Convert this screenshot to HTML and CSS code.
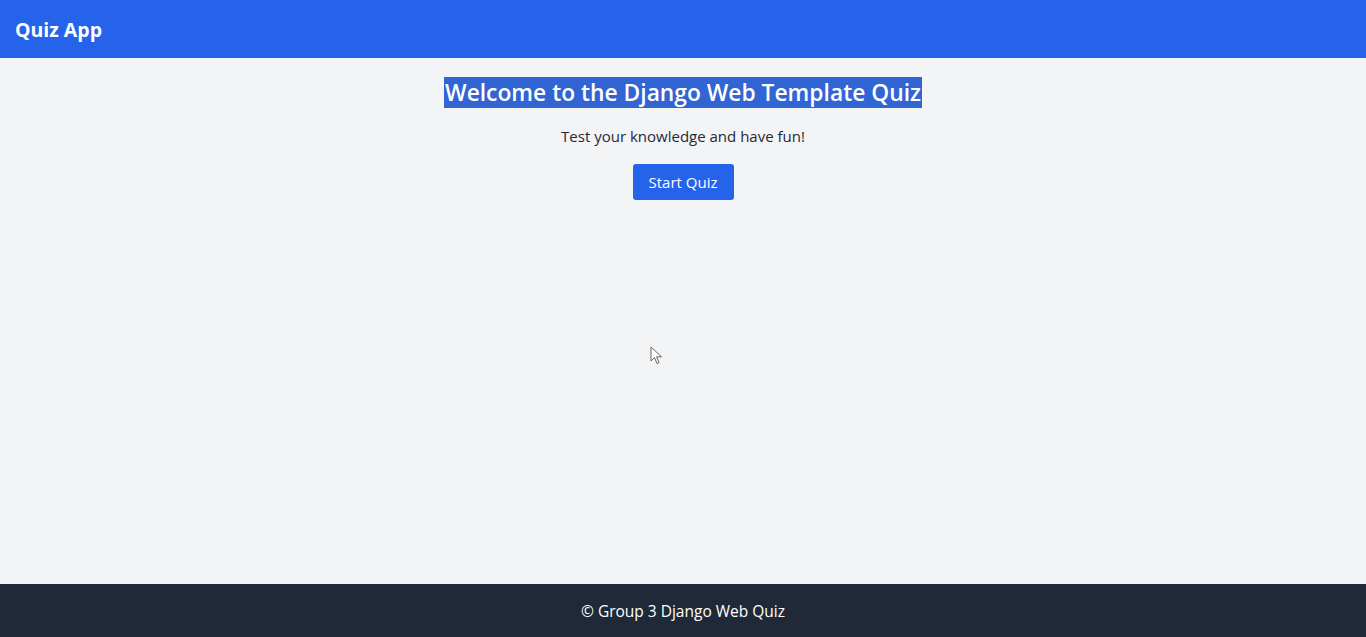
FILE: index.html
```html
<!DOCTYPE html>
<html lang="en">
<head>
<meta charset="utf-8">
<title>Quiz App</title>
<link rel="stylesheet" href="styles.css">
</head>
<body>
<header class="topbar">
  <span class="brand">Quiz App</span>
</header>
<main class="main">
  <h1 class="title"><span class="selected">Welcome to the Django Web Template Quiz</span></h1>
  <p class="subtitle">Test your knowledge and have fun!</p>
  <a class="btn" href="#">Start Quiz</a>
</main>
<footer class="footer">© Group 3 Django Web Quiz</footer>
<svg class="cursor" width="14" height="20" viewBox="0 0 14 20"><path d="M1 1 L1 15 L4.5 11.5 L7 17.5 L9 16.6 L6.6 10.8 L11.5 10.8 Z" fill="#fff" stroke="#666" stroke-width="1"/></svg>
</body>
</html>
```
FILE: styles.css
```css
* { box-sizing: border-box; }
html, body { margin: 0; height: 100%; }
body {
  display: flex;
  flex-direction: column;
  min-height: 100vh;
  background: #f3f4f6;
  font-family: "Open Sans", "Noto Sans", sans-serif;
  color: #1f2937;
  position: relative;
}
.topbar {
  height: 58px;
  background: #2563eb;
  display: flex;
  align-items: center;
  padding: 0 15px;
}
.brand {
  color: #fff;
  font-weight: 700;
  font-size: 19.5px;
}
.main {
  flex: 1;
  display: flex;
  flex-direction: column;
  align-items: center;
  padding-top: 20px;
}
.title {
  margin: 0;
  font-size: 22.8px;
  font-weight: 600;
  line-height: 30px;
}
.selected {
  background: #3165d4;
  color: #fff;
  padding: 0 1px;
}
.subtitle {
  margin: 16px 0 0;
  font-size: 15px;
  line-height: 24px;
  color: #1f2937;
}
.btn {
  margin-top: 16px;
  display: inline-block;
  background: #2563eb;
  color: #fff;
  text-decoration: none;
  font-size: 15px;
  line-height: 20px;
  padding: 8px 16px;
  border-radius: 3px;
  width: 101px;
  text-align: center;
}
.footer {
  height: 53px;
  background: #1f2937;
  color: #fff;
  font-size: 15.5px;
  display: flex;
  align-items: center;
  justify-content: center;
}
.cursor {
  position: absolute;
  left: 650px;
  top: 346px;
}
```
